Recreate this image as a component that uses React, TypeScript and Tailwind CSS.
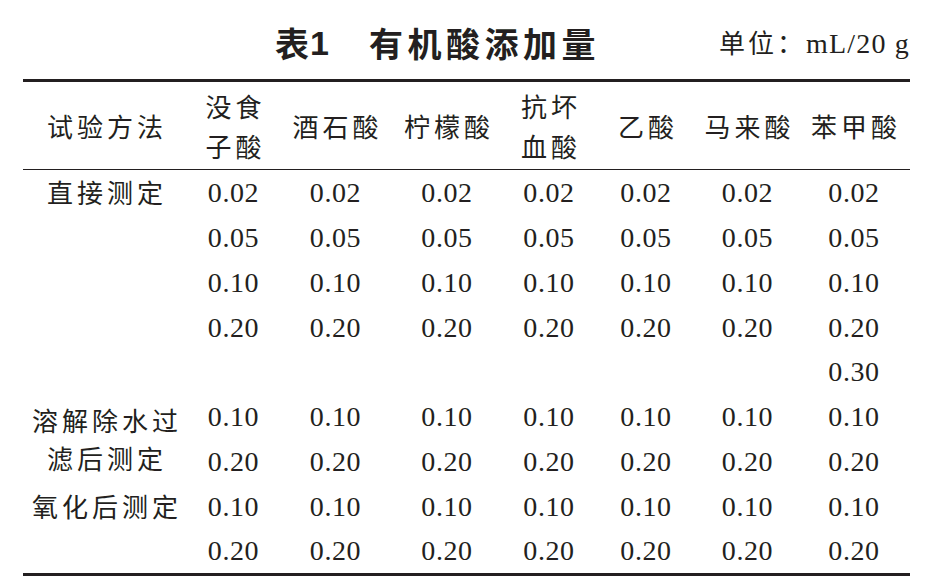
const cjk = "font-['Noto_Sans_CJK_SC',sans-serif]";
const num = "font-['Liberation_Serif','Times_New_Roman',serif]";

const acids = [
  ['没食', '子酸'],
  ['酒石酸'],
  ['柠檬酸'],
  ['抗坏', '血酸'],
  ['乙酸'],
  ['马来酸'],
  ['苯甲酸'],
];

const six = (v: string) => [v, v, v, v, v, v, v];

// each row: label (null = covered by the span above), values
const rows: { label: string[] | null; span?: boolean; values: string[] }[] = [
  { label: ['直接测定'], values: six('0.02') },
  { label: [], values: six('0.05') },
  { label: [], values: six('0.10') },
  { label: [], values: six('0.20') },
  { label: [], values: ['', '', '', '', '', '', '0.30'] },
  { label: ['溶解除水过', '滤后测定'], span: true, values: six('0.10') },
  { label: null, values: six('0.20') },
  { label: ['氧化后测定'], values: six('0.10') },
  { label: [], values: six('0.20') },
];

const cols = 'grid grid-cols-[164px_93px_111px_112px_92px_102px_101px_112px]';

export default function App() {
  return (
    <div className="w-[944px] h-[581px] bg-white text-[#231f20] overflow-hidden">
      <div className="h-[79px] flex items-center pt-[6px] pr-[34px]">
        <div className={`pl-[275px] flex items-center text-[34px] font-bold leading-none ${cjk}`}>
          <span>表</span>
          <span className="font-['Liberation_Sans',sans-serif] ml-[1px]">1</span>
          <span className="ml-[40px] tracking-[4.5px]">有机酸添加量</span>
        </div>
        <div className="ml-auto flex items-baseline pt-[2px]">
          <span className={`text-[26px] tracking-[3px] ${cjk}`}>单位：</span>
          <span className={`text-[28px] tracking-[1.2px] ${num}`}>mL/20 g</span>
        </div>
      </div>

      <div className="ml-[23px] w-[887px] border-t-[3px] border-b-[3px] border-[#231f20]">
        <div className={`${cols} h-[88px] border-b border-[#231f20] ${cjk} text-[26px]`}>
          <div className="flex items-center justify-center tracking-[4px] pl-[4px]">试验方法</div>
          {acids.map((a, i) => (
            <div key={i} className="flex flex-col items-center justify-center leading-[40px] tracking-[4px] pl-[4px]">
              {a.map((l, j) => (
                <span key={j}>{l}</span>
              ))}
            </div>
          ))}
        </div>

        <div className={`${cols} auto-rows-[44.75px]`}>
          {rows.map((r, i) => (
            <Row key={i} r={r} />
          ))}
        </div>
      </div>
    </div>
  );
}

function Row({ r }: { r: (typeof rows)[number] }) {
  return (
    <>
      {r.label !== null && (
        <div
          className={`flex flex-col items-center justify-center text-[26px] tracking-[4px] pl-[4px] leading-[38px] ${cjk} ${
            r.span ? 'row-span-2' : ''
          }`}
        >
          {r.label.map((l, j) => (
            <span key={j}>{l}</span>
          ))}
        </div>
      )}
      {r.values.map((v, j) => (
        <div key={j} className={`flex items-center justify-center text-[28px] tracking-[0.6px] pt-[2px] ${num}`}>
          {v}
        </div>
      ))}
    </>
  );
}
